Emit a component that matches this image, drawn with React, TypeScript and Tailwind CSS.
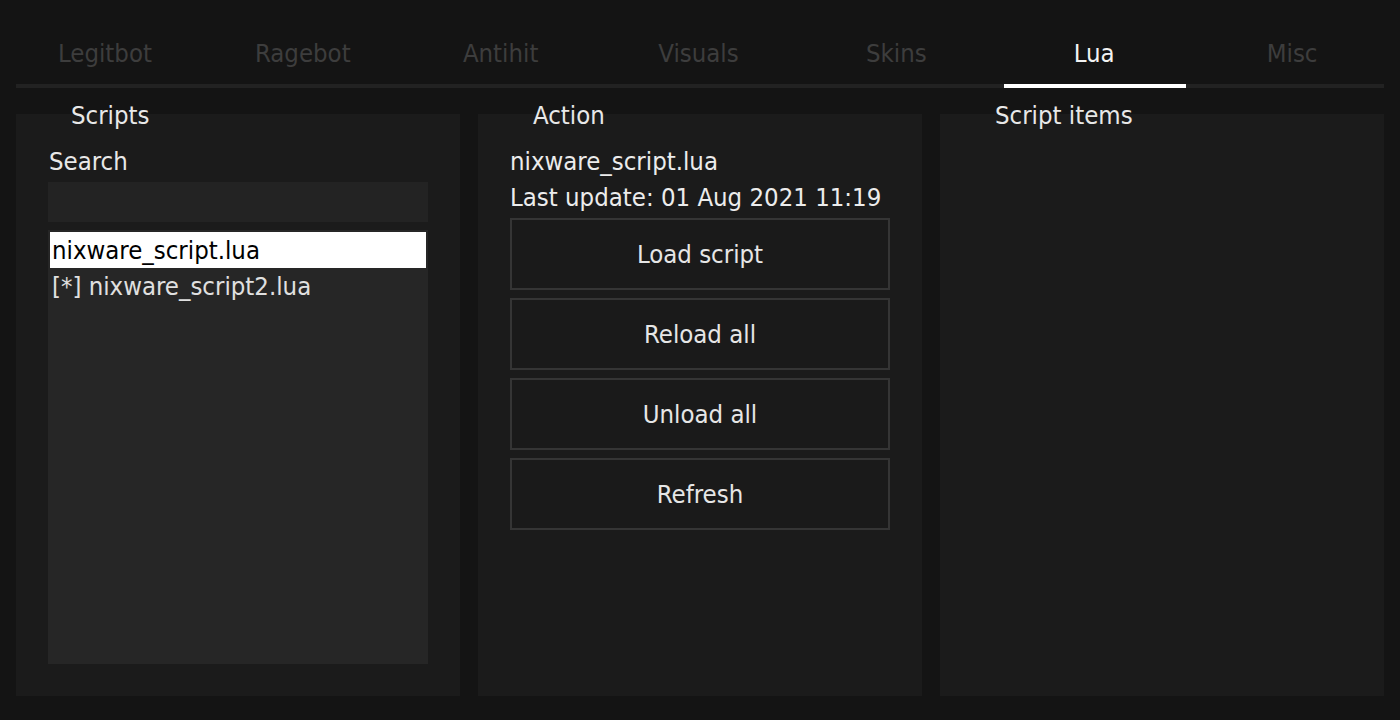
import { useState } from 'react';

const tabs = ['Legitbot', 'Ragebot', 'Antihit', 'Visuals', 'Skins', 'Lua', 'Misc'];
const scripts = ['nixware_script.lua', '[*] nixware_script2.lua'];
const actions = ['Load script', 'Reload all', 'Unload all', 'Refresh'];

const font = "font-['DejaVu_Sans_Condensed','DejaVu_Sans',sans-serif] [font-stretch:condensed]";

function Panel({ title, children }: { title: string; children?: React.ReactNode }) {
  return (
    <div className="bg-[#1b1b1b] w-[444px] flex flex-col px-8 pb-8">
      <div className="-mt-[14px] pl-[23px] h-[30px] leading-[30px] text-[#e8e8e8]">{title}</div>
      {children}
    </div>
  );
}

export default function App() {
  const [active, setActive] = useState('Lua');
  const [selected, setSelected] = useState(0);

  return (
    <div className={`w-[1400px] h-[720px] bg-[#141414] text-[25.5px] ${font} flex flex-col px-4`}>
      <div className="h-[88px] border-b-4 border-[#222222]">
        <div className="flex w-[1385px] -ml-[10px] h-[84px]">
          {tabs.map((tab) => (
            <button
              key={tab}
              onClick={() => setActive(tab)}
              className="flex-1 flex justify-center relative pt-[38px] leading-[30px]"
            >
              <span className={active === tab ? 'text-[#f2f2f2]' : 'text-[#3d3d3d]'}>{tab}</span>
              {active === tab && (
                <span className="absolute left-[9px] right-[7px] -bottom-1 h-1 bg-white" />
              )}
            </button>
          ))}
        </div>
      </div>

      <div className="flex gap-[18px] mt-[26px] h-[582px]">
        <Panel title="Scripts">
          <div className="mt-4 leading-[30px] pl-px text-[#e8e8e8]">Search</div>
          <div className="mt-[6px] h-10 bg-[#232323]" />
          <div className="mt-2 flex-1 bg-[#262626] p-[2px]">
            {scripts.map((s, i) => (
              <div
                key={s}
                onClick={() => setSelected(i)}
                className={`h-9 leading-9 pl-[2px] ${
                  selected === i ? 'bg-white text-black' : 'text-[#e0e0e0]'
                }`}
              >
                {s}
              </div>
            ))}
          </div>
        </Panel>

        <Panel title="Action">
          <div className="mt-4 leading-[30px] text-[#ececec]">nixware_script.lua</div>
          <div className="mt-[6px] leading-[30px] text-[#ececec]">Last update: 01 Aug 2021 11:19</div>
          <div className="mt-[6px] flex flex-col gap-2">
            {actions.map((a) => (
              <button
                key={a}
                className="w-[380px] h-[72px] border-2 border-[#353535] bg-[#1a1a1a] text-[#e6e6e6]"
              >
                {a}
              </button>
            ))}
          </div>
        </Panel>

        <Panel title="Script items" />
      </div>
    </div>
  );
}
